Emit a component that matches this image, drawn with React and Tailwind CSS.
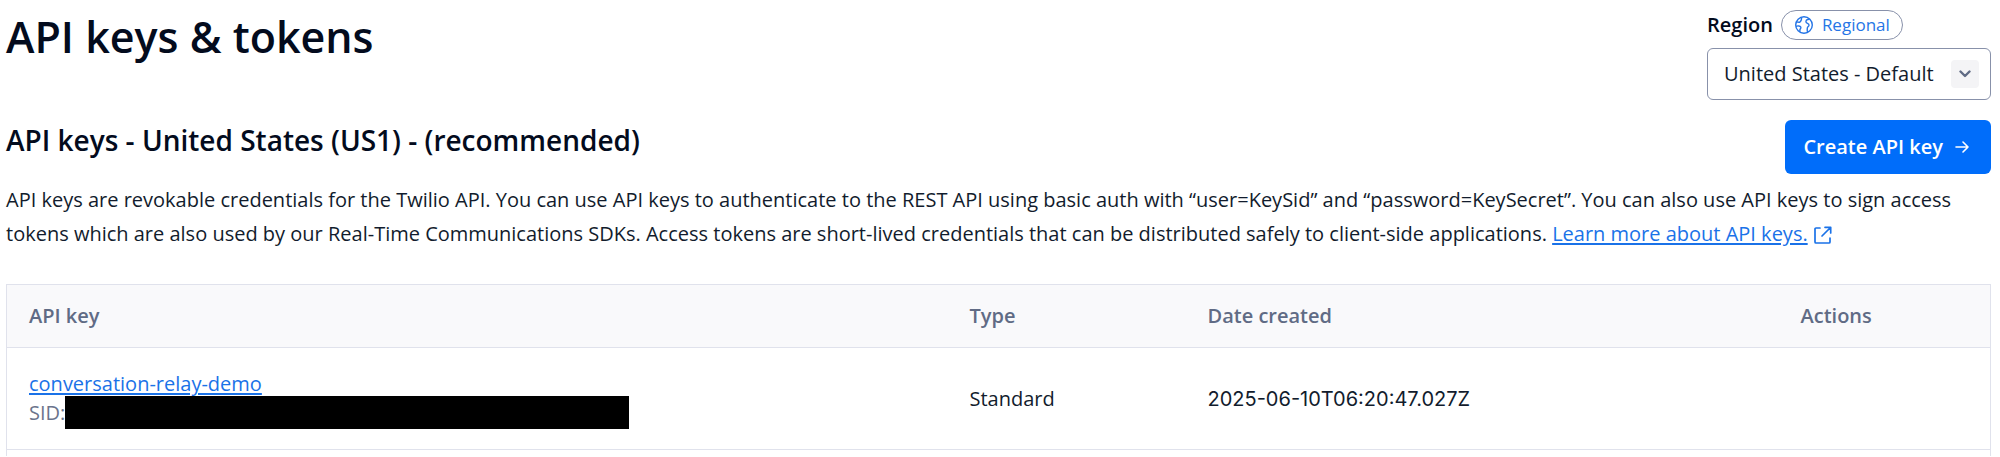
import React from "react";

function GlobeIcon() {
  return (
    <svg viewBox="0 0 20 20" className="size-5" fill="none" stroke="currentColor" strokeWidth="1.4" strokeLinejoin="round" aria-hidden="true">
      <circle cx="10" cy="10" r="8.3" />
      <path d="M2 7.200c1.600-.5 2.600.4 3.900-.2 1.400-.7 1.700-2 1.700-4.700M1.900 11.400c1.800-.9 4.300-.5 4.900.7.600 1.300-.8 1.700-.9 2.700 0 1 .1 1.700-.400 2.100" />
      <path d="M15.600 4.200c-1.400 0-2.600.2-3.300 1.100-.8 1.200-.2 2.400.9 2.900 1.200.5 1.900.7 1.800 2-.1 1.300-1.500 1.500-1.700 2.900-.2 1.400-.1 2.900.200 4.300" />
    </svg>
  );
}

function ExternalIcon() {
  return (
    <svg viewBox="0 0 18 18" className="ml-1.5 inline-block size-[18px] align-[-3px]" fill="none" stroke="currentColor" strokeWidth="1.7" strokeLinecap="round" strokeLinejoin="round" aria-hidden="true">
      <path d="M6 2H2a1 1 0 0 0-1 1v13a1 1 0 0 0 1 1h13a1 1 0 0 0 1-1v-4M8 10l8.5-8.5M11 1.3h5.7V7" />
    </svg>
  );
}

function RegionPicker() {
  return (
    <div className="flex w-[284px] flex-col gap-2">
      <div className="flex items-center gap-2">
        <label htmlFor="region" className="text-[20px] leading-7 font-semibold text-[#030b1d]">Region</label>
        <span className="flex h-[30px] items-center gap-2 rounded-full border border-[#8891aa] px-3 text-[17px] leading-6 text-[#2575e6]">
          <GlobeIcon />
          Regional
        </span>
      </div>
      <div className="relative">
        <select id="region" className="h-[52px] w-full appearance-none rounded-md border border-[#8891aa] bg-white pr-12 pl-4 text-[20px] text-[#121c2d]">
          <option>United States - Default</option>
        </select>
        <span className="pointer-events-none absolute top-3 right-3 flex size-7 items-center justify-center rounded bg-[#f4f4f6] text-[#606b85]">
          <svg viewBox="0 0 12 8" className="h-2 w-3" fill="none" stroke="currentColor" strokeWidth="2.4" strokeLinecap="round" strokeLinejoin="round" aria-hidden="true">
            <path d="M1.5 1.5 6 6l4.5-4.5" />
          </svg>
        </span>
      </div>
    </div>
  );
}

const keys = [{ name: "conversation-relay-demo", type: "Standard", created: "2025-06-10T06:20:47.027Z" }];

export default function App() {
  return (
    <main className="bg-white pt-2.5 pr-[9px] pl-1.5 font-['Open_Sans',sans-serif] text-[#121c2d]">
      <header className="flex items-start justify-between">
        <h1 className="text-[43px] leading-[54px] font-semibold text-[#030b1d]">API keys &amp; tokens</h1>
        <RegionPicker />
      </header>

      <section className="mt-5">
        <div className="flex items-start justify-between">
          <h2 className="text-[28px] leading-10 font-semibold text-[#030b1d]">API keys - United States (US1) - (recommended)</h2>
          <button type="button" className="flex h-[54px] items-center gap-3 rounded-md bg-[#006dfa] pr-[22px] pl-[18px] text-[20px] font-semibold text-white">
            Create API key
            <svg viewBox="0 0 14 14" className="size-3.5" fill="none" stroke="currentColor" strokeWidth="1.6" strokeLinecap="round" strokeLinejoin="round" aria-hidden="true">
              <path d="M1 7h12M8 2l5 5-5 5" />
            </svg>
          </button>
        </div>
        <p className="mt-[9px] pr-8 text-[20px] leading-[34px]">
          API keys are revokable credentials for the Twilio API. You can use API keys to authenticate to the REST API using basic auth with “user=KeySid” and “password=KeySecret”. You can also use API keys to sign access tokens which are also used by our Real-Time Communications SDKs. Access tokens are short-lived credentials that can be distributed safely to client-side applications.{" "}
          <a href="#learn" className="text-[#1a72e8] underline underline-offset-2">
            Learn more about API keys.
            <ExternalIcon />
          </a>
        </p>

        <table className="mt-[33px] w-full table-fixed border-collapse border-x border-t border-[#e0e2ec] text-left text-[20px] leading-7">
          <colgroup>
            <col className="w-[941px]" />
            <col className="w-[238px]" />
            <col />
            <col className="w-[212px]" />
          </colgroup>
          <thead className="bg-[#f9f9fb] text-[#606b85]">
            <tr className="h-[63px] border-b border-[#e0e2ec]">
              <th scope="col" className="px-[22px] font-semibold">API key</th>
              <th scope="col" className="px-[22px] font-semibold">Type</th>
              <th scope="col" className="px-[22px] font-semibold">Date created</th>
              <th scope="col" className="px-[22px] font-semibold">Actions</th>
            </tr>
          </thead>
          <tbody>
            {keys.map((k) => (
              <tr key={k.name} className="h-[102px] border-b border-[#e0e2ec]">
                <td className="px-[22px] pt-0.5">
                  <a href="#key" className="text-[#1a72e8] underline underline-offset-2">{k.name}</a>
                  <div className="-mt-0.5 flex items-center text-[#6b748c]">
                    SID:
                    <span className="h-[33px] w-[564px] bg-black" />
                  </div>
                </td>
                <td className="px-[22px]">{k.type}</td>
                <td className="px-[22px] font-['Inter',sans-serif]">{k.created}</td>
                <td />
              </tr>
            ))}
            <tr className="h-1.5">
              <td colSpan={4} className="p-0" />
            </tr>
          </tbody>
        </table>
      </section>
    </main>
  );
}
